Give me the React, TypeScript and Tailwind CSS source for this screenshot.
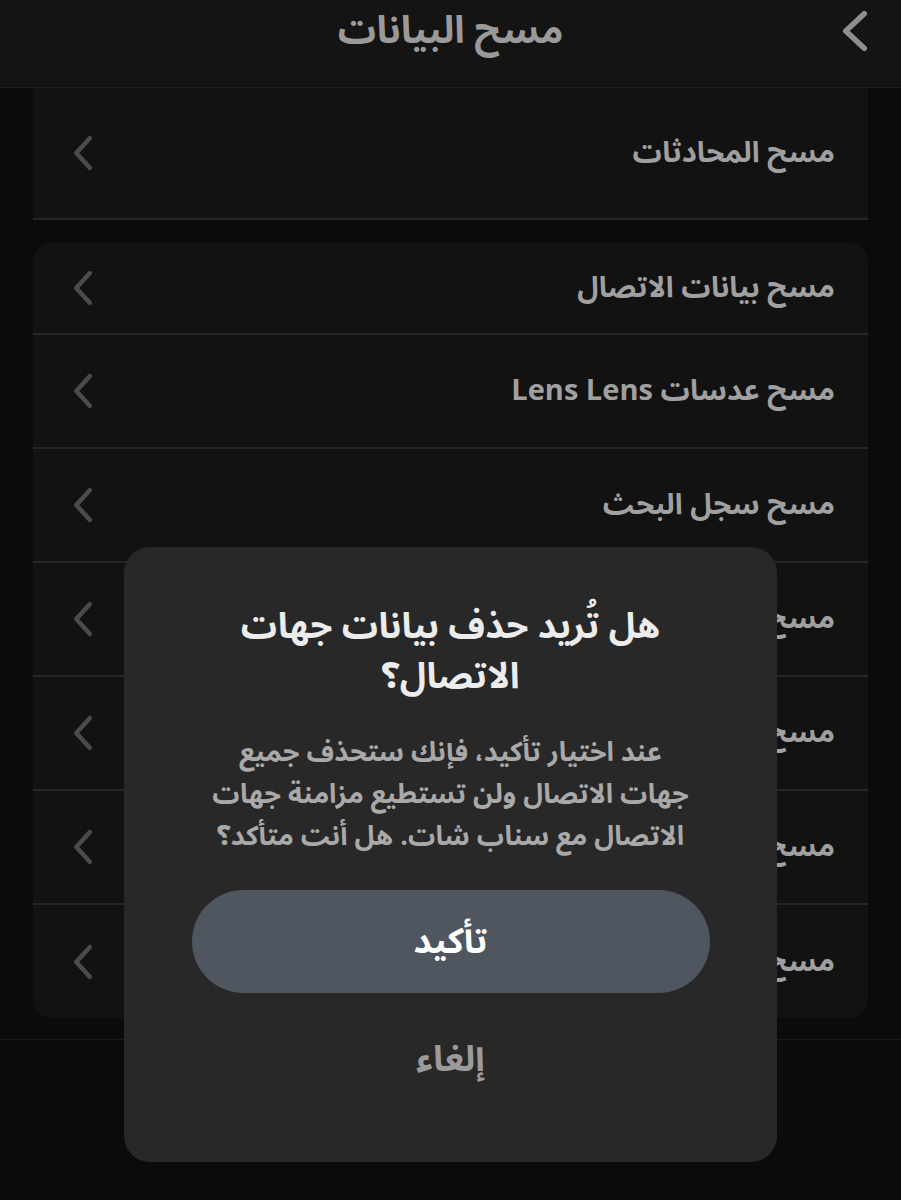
import React from "react";

const FONT = { fontFamily: '"Noto Sans Arabic", "Noto Naskh Arabic", "DejaVu Sans", "Noto Sans", sans-serif' };

function Chevron({ color, w = 20, h = 36, sw = 4.5 }: { color: string; w?: number; h?: number; sw?: number }) {
  return (
    <svg width={w} height={h} viewBox={`0 0 ${w} ${h}`} fill="none">
      <path
        d={`M${w - sw / 2 - 1} ${sw / 2 + 1} L${sw / 2 + 1} ${h / 2} L${w - sw / 2 - 1} ${h - sw / 2 - 1}`}
        stroke={color}
        strokeWidth={sw}
        strokeLinecap="round"
        strokeLinejoin="round"
      />
    </svg>
  );
}

function Row({ label, h, last }: { label: string; h: number; last?: boolean }) {
  return (
    <div
      className={`flex items-center justify-between pr-[33px] pl-[40px] ${last ? "" : "border-b-2 border-[#262626]"}`}
      style={{ height: h }}
    >
      <span className="text-[29px] font-bold text-[#a0a0a0] leading-[40px]">{label}</span>
      <Chevron color="#4b4b4b" />
    </div>
  );
}

export default function App() {
  return (
    <div dir="rtl" style={FONT} className="relative w-full h-[1200px] bg-[#0b0b0b] overflow-hidden">
      {/* Header */}
      <div className="h-[88px] bg-[#141414] border-b border-[#1e1e1e] grid grid-cols-[1fr_auto_1fr] items-start pt-[6px] px-[33px]">
        <div className="flex justify-start pt-[4px]">
          <Chevron color="#8e8e8e" w={26} h={42} sw={5.5} />
        </div>
        <div className="text-[38px] font-bold text-[#9a9a9a] leading-[50px]">مسح البيانات</div>
        <div />
      </div>

      <div className="px-[33px]">
        {/* Card 1 */}
        <div className="bg-[#121212] border-b-2 border-[#262626]">
          <Row label="مسح المحادثات" h={130} last />
        </div>

        {/* Card 2 */}
        <div className="mt-[23px] bg-[#121212] rounded-[18px] overflow-hidden">
          <Row label="مسح بيانات الاتصال" h={92} />
          <Row label="مسح عدسات Lens Lens" h={114} />
          <Row label="مسح سجل البحث" h={114} />
          <Row label="مسح الملصقات الأخيرة" h={114} />
          <Row label="مسح ذاكرة التخزين المؤقت" h={114} />
          <Row label="مسح بيانات الكاميرا" h={114} />
          <Row label="مسح سجل العروض" h={113} last />
        </div>
      </div>
      <div className="mt-[21px] border-t border-[#1c1c1c]" />

      {/* Modal */}
      <div className="absolute left-[124px] top-[547px] w-[653px] h-[615px] rounded-[26px] bg-[#282828] flex flex-col items-center">
        <div className="mt-[55px] text-center text-[36px] font-bold text-[#ececec] leading-[50px]">
          هل تُريد حذف بيانات جهات
          <br />
          الاتصال؟
        </div>
        <div className="mt-[30px] text-center text-[27px] font-bold text-[#a9a9a9] leading-[42px]">
          عند اختيار تأكيد، فإنك ستحذف جميع
          <br />
          جهات الاتصال ولن تستطيع مزامنة جهات
          <br />
          الاتصال مع سناب شات. هل أنت متأكد؟
        </div>
        <div className="mt-[32px] w-[518px] h-[103px] rounded-full bg-[#4f5660] flex items-center justify-center">
          <span className="text-[35px] font-bold text-white leading-[50px]">تأكيد</span>
        </div>
        <div className="mt-[42px] text-[36px] font-bold text-[#9b9b9b] leading-[50px]">إلغاء</div>
      </div>
    </div>
  );
}
